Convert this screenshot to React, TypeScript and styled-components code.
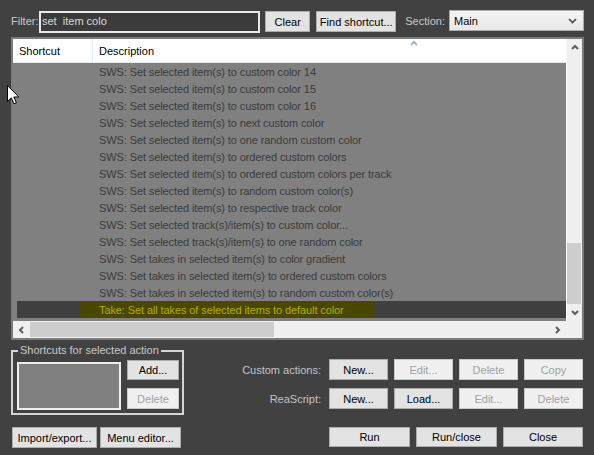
import React from 'react';
import styled, { createGlobalStyle } from 'styled-components';

const GlobalStyle = createGlobalStyle`
  html, body {
    margin: 0;
    padding: 0;
    background: #414141;
  }
  body {
    font-family: "Liberation Sans", Arial, sans-serif;
    font-size: 11px;
  }
`;

const rows = [
    'SWS: Set selected item(s) to custom color 14',
    'SWS: Set selected item(s) to custom color 15',
    'SWS: Set selected item(s) to custom color 16',
    'SWS: Set selected item(s) to next custom color',
    'SWS: Set selected item(s) to one random custom color',
    'SWS: Set selected item(s) to ordered custom colors',
    'SWS: Set selected item(s) to ordered custom colors per track',
    'SWS: Set selected item(s) to random custom color(s)',
    'SWS: Set selected item(s) to respective track color',
    'SWS: Set selected track(s)/item(s) to custom color...',
    'SWS: Set selected track(s)/item(s) to one random color',
    'SWS: Set takes in selected item(s) to color gradient',
    'SWS: Set takes in selected item(s) to ordered custom colors',
    'SWS: Set takes in selected item(s) to random custom color(s)',
];
const selectedRow = 'Take: Set all takes of selected items to default color';

const Window = styled.div`
  position: relative;
  width: 594px;
  height: 455px;
  box-sizing: border-box;
  padding: 10px 10px 0 11px;
  background: #414141;
  display: flex;
  flex-direction: column;
  overflow: hidden;
`;

const TopBar = styled.div`
  display: flex;
  align-items: flex-start;
  height: 22px;
`;

const Caption = styled.span<{ $width?: number; $ml?: number }>`
  color: #c8c8c8;
  line-height: 22px;
  white-space: nowrap;
  width: ${p => (p.$width ? `${p.$width}px` : 'auto')};
  margin-left: ${p => p.$ml ?? 0}px;
  flex-shrink: 0;
`;

const FilterInput = styled.input`
  box-sizing: border-box;
  width: 223px;
  height: 22px;
  margin: 1px 0 0 0;
  padding: 0 0 3px 1px;
  border: 2px solid #e9e9e9;
  background: #3b3b3b;
  color: #dadada;
  font-family: inherit;
  font-size: 11px;
  outline: none;
`;

const Button = styled.button<{ $w: number; $h?: number; $disabled?: boolean }>`
  box-sizing: border-box;
  flex-shrink: 0;
  width: ${p => p.$w}px;
  height: ${p => p.$h ?? 21}px;
  padding: 0;
  border: 1px solid ${p => (p.$disabled ? '#c9c9c9' : '#adadad')};
  background: ${p => (p.$disabled ? '#f0f0f0' : '#e3e3e3')};
  color: ${p => (p.$disabled ? '#a2a2a2' : '#000')};
  font-family: inherit;
  font-size: 11px;
  white-space: nowrap;
  cursor: default;
`;

const TopButton = styled(Button)<{ $ml: number }>`
  margin-top: 1px;
  margin-left: ${p => p.$ml}px;
`;

const Select = styled.div`
  box-sizing: border-box;
  width: 136px;
  height: 21px;
  margin-left: 4px;
  padding: 0 6px 0 4px;
  border: 1px solid #acacac;
  background: linear-gradient(#f4f4f4, #e8e8e8);
  color: #000;
  display: flex;
  align-items: center;
  justify-content: space-between;
`;

const ListFrame = styled.div`
  box-sizing: border-box;
  margin-top: 5px;
  width: 100%;
  height: 303px;
  border: 2px solid #7b7b7b;
  display: grid;
  grid-template-columns: 1fr 16px;
  grid-template-rows: 282px 17px;
`;

const ListArea = styled.div`
  background: #808080;
  overflow: hidden;
  display: flex;
  flex-direction: column;
`;

const Header = styled.div`
  position: relative;
  display: flex;
  height: 23px;
  flex-shrink: 0;
  background: #fff;
  border-bottom: 1px solid #e3ebf5;
`;

const HeaderCell = styled.div<{ $w?: number }>`
  box-sizing: border-box;
  width: ${p => (p.$w ? `${p.$w}px` : 'auto')};
  flex: ${p => (p.$w ? 'none' : 1)};
  padding: 1px 0 0 6px;
  line-height: 23px;
  color: #000;
  border-right: ${p => (p.$w ? '1px solid #e3ebf5' : 'none')};
`;

const SortCaret = styled.svg`
  position: absolute;
  left: 397px;
  top: 2px;
`;

const Row = styled.div`
  height: 17px;
  line-height: 18px;
  padding-left: 86px;
  color: #3c3c3c;
  letter-spacing: -0.1px;
  white-space: nowrap;
  flex-shrink: 0;
`;

const SelectedRow = styled.div`
  height: 17px;
  line-height: 18px;
  margin-left: 4px;
  padding-left: 63px;
  background: #404040;
  letter-spacing: -0.1px;
  white-space: nowrap;
  flex-shrink: 0;
`;

const Highlight = styled.span`
  display: inline-block;
  height: 17px;
  padding: 0 30px 0 19px;
  background: #4a4800;
  color: #b2ac00;
`;

const VScroll = styled.div`
  box-sizing: border-box;
  background: #f0f0f0;
  border-left: 1px solid #fbfbfb;
  display: flex;
  flex-direction: column;
`;

const ArrowBox = styled.div<{ $w?: number }>`
  width: ${p => (p.$w ? `${p.$w}px` : '100%')};
  height: 17px;
  flex-shrink: 0;
  display: flex;
  align-items: center;
  justify-content: center;
`;

const VTrack = styled.div`
  flex: 1;
  display: flex;
  flex-direction: column;
  justify-content: flex-end;
`;

const VThumb = styled.div<{ $h: number }>`
  height: ${p => p.$h}px;
  margin-right: 1px;
  background: #cdcdcd;
`;

const HScroll = styled.div`
  grid-column: 1 / span 2;
  background: #f0f0f0;
  display: flex;
  align-items: stretch;
`;

const HThumb = styled.div<{ $w: number }>`
  width: ${p => p.$w}px;
  margin: 1px 0;
  background: #cdcdcd;
`;

const Spacer = styled.div`
  flex: 1;
`;

const Corner = styled.div`
  width: 16px;
  flex-shrink: 0;
`;

const Bottom = styled.div`
  display: flex;
  justify-content: space-between;
  margin-top: 10px;
`;

const LeftCol = styled.div`
  width: 173px;
  display: flex;
  flex-direction: column;
`;

const GroupBox = styled.div`
  position: relative;
  box-sizing: border-box;
  height: 65px;
  border: 2px solid #d4d4d4;
  padding: 10px 0 0 4px;
  display: flex;
  gap: 6px;
`;

const GroupLabel = styled.span`
  position: absolute;
  left: 5px;
  top: -8px;
  padding: 0 2px;
  line-height: 13px;
  background: #414141;
  color: #c8c8c8;
  white-space: nowrap;
`;

const ShortcutList = styled.div`
  box-sizing: border-box;
  width: 104px;
  height: 48px;
  border: 2px solid #eeeeee;
  background: #808080;
`;

const ButtonStack = styled.div`
  margin-top: -2px;
  display: flex;
  flex-direction: column;
  gap: 8px;
`;

const ButtonRow = styled.div<{ $gap: number; $mt?: number; $ml?: number }>`
  display: flex;
  align-items: center;
  gap: ${p => p.$gap}px;
  margin-top: ${p => p.$mt ?? 0}px;
  margin-left: ${p => p.$ml ?? 0}px;
`;

const RightCol = styled.div`
  display: flex;
  flex-direction: column;
  align-items: flex-end;
  padding-top: 9px;
  margin-right: 1px;
`;

const RowCaption = styled.span`
  color: #c4c4c4;
  margin-right: 2px;
  white-space: nowrap;
`;

const Cursor = styled.svg`
  position: absolute;
  left: 7px;
  top: 85px;
`;

const Chevron: React.FC<{ dir: 'up' | 'down' | 'left' | 'right' }> = ({ dir }) => {
    const pts = {
        up: '1,5 4,2 7,5',
        down: '1,2 4,5 7,2',
        left: '5,1 2,4 5,7',
        right: '2,1 5,4 2,7',
    }[dir];
    return (
        <svg width="8" height="8" viewBox="0 0 8 8">
            <polyline points={pts} fill="none" stroke="#5e5e5e" strokeWidth="2" />
        </svg>
    );
};

export default function App() {
    return (
        <>
            <GlobalStyle />
            <Window>
                <TopBar>
                    <Caption $width={28}>Filter:</Caption>
                    <FilterInput defaultValue="set  item colo" readOnly />
                    <TopButton $w={45} $ml={5}>Clear</TopButton>
                    <TopButton $w={80} $ml={6}>Find shortcut...</TopButton>
                    <Caption $ml={9}>Section:</Caption>
                    <Select>
                        <span>Main</span>
                        <svg width="9" height="6" viewBox="0 0 9 6">
                            <polyline points="1,1 4.5,4.5 8,1" fill="none" stroke="#4a4a4a" strokeWidth="1.6" />
                        </svg>
                    </Select>
                </TopBar>

                <ListFrame>
                    <ListArea>
                        <Header>
                            <HeaderCell $w={80}>Shortcut</HeaderCell>
                            <HeaderCell>Description</HeaderCell>
                            <SortCaret width="8" height="5" viewBox="0 0 8 5">
                                <polyline points="1,4 4,1 7,4" fill="none" stroke="#6f9cc6" strokeWidth="1.3" />
                            </SortCaret>
                        </Header>
                        {rows.map(r => (
                            <Row key={r}>{r}</Row>
                        ))}
                        <SelectedRow>
                            <Highlight>{selectedRow}</Highlight>
                        </SelectedRow>
                    </ListArea>
                    <VScroll>
                        <ArrowBox><Chevron dir="up" /></ArrowBox>
                        <VTrack>
                            <VThumb $h={61} />
                        </VTrack>
                        <ArrowBox><Chevron dir="down" /></ArrowBox>
                    </VScroll>
                    <HScroll>
                        <ArrowBox $w={17}><Chevron dir="left" /></ArrowBox>
                        <HThumb $w={244} />
                        <Spacer />
                        <ArrowBox $w={17}><Chevron dir="right" /></ArrowBox>
                        <Corner />
                    </HScroll>
                </ListFrame>

                <Bottom>
                    <LeftCol>
                        <GroupBox>
                            <GroupLabel>Shortcuts for selected action</GroupLabel>
                            <ShortcutList />
                            <ButtonStack>
                                <Button $w={52} $h={20}>Add...</Button>
                                <Button $w={52} $h={21} $disabled>Delete</Button>
                            </ButtonStack>
                        </GroupBox>
                        <ButtonRow $gap={3} $mt={12} $ml={1}>
                            <Button $w={85} $h={21}>Import/export...</Button>
                            <Button $w={81} $h={21}>Menu editor...</Button>
                        </ButtonRow>
                    </LeftCol>

                    <RightCol>
                        <ButtonRow $gap={6}>
                            <RowCaption>Custom actions:</RowCaption>
                            <Button $w={59}>New...</Button>
                            <Button $w={59} $disabled>Edit...</Button>
                            <Button $w={59} $disabled>Delete</Button>
                            <Button $w={59} $disabled>Copy</Button>
                        </ButtonRow>
                        <ButtonRow $gap={6} $mt={8}>
                            <RowCaption>ReaScript:</RowCaption>
                            <Button $w={59}>New...</Button>
                            <Button $w={59}>Load...</Button>
                            <Button $w={59} $disabled>Edit...</Button>
                            <Button $w={59} $disabled>Delete</Button>
                        </ButtonRow>
                        <ButtonRow $gap={6} $mt={18}>
                            <Button $w={81} $h={20}>Run</Button>
                            <Button $w={81} $h={20}>Run/close</Button>
                            <Button $w={80} $h={20}>Close</Button>
                        </ButtonRow>
                    </RightCol>
                </Bottom>

                <Cursor width="13" height="20" viewBox="0 0 13 20">
                    <path
                        d="M0.5 0.5 L0.5 16.5 L4.3 12.8 L7 18.8 L9.4 17.8 L6.8 12 L11.8 12 Z"
                        fill="#fff"
                        stroke="#000"
                        strokeWidth="1"
                    />
                </Cursor>
            </Window>
        </>
    );
}
